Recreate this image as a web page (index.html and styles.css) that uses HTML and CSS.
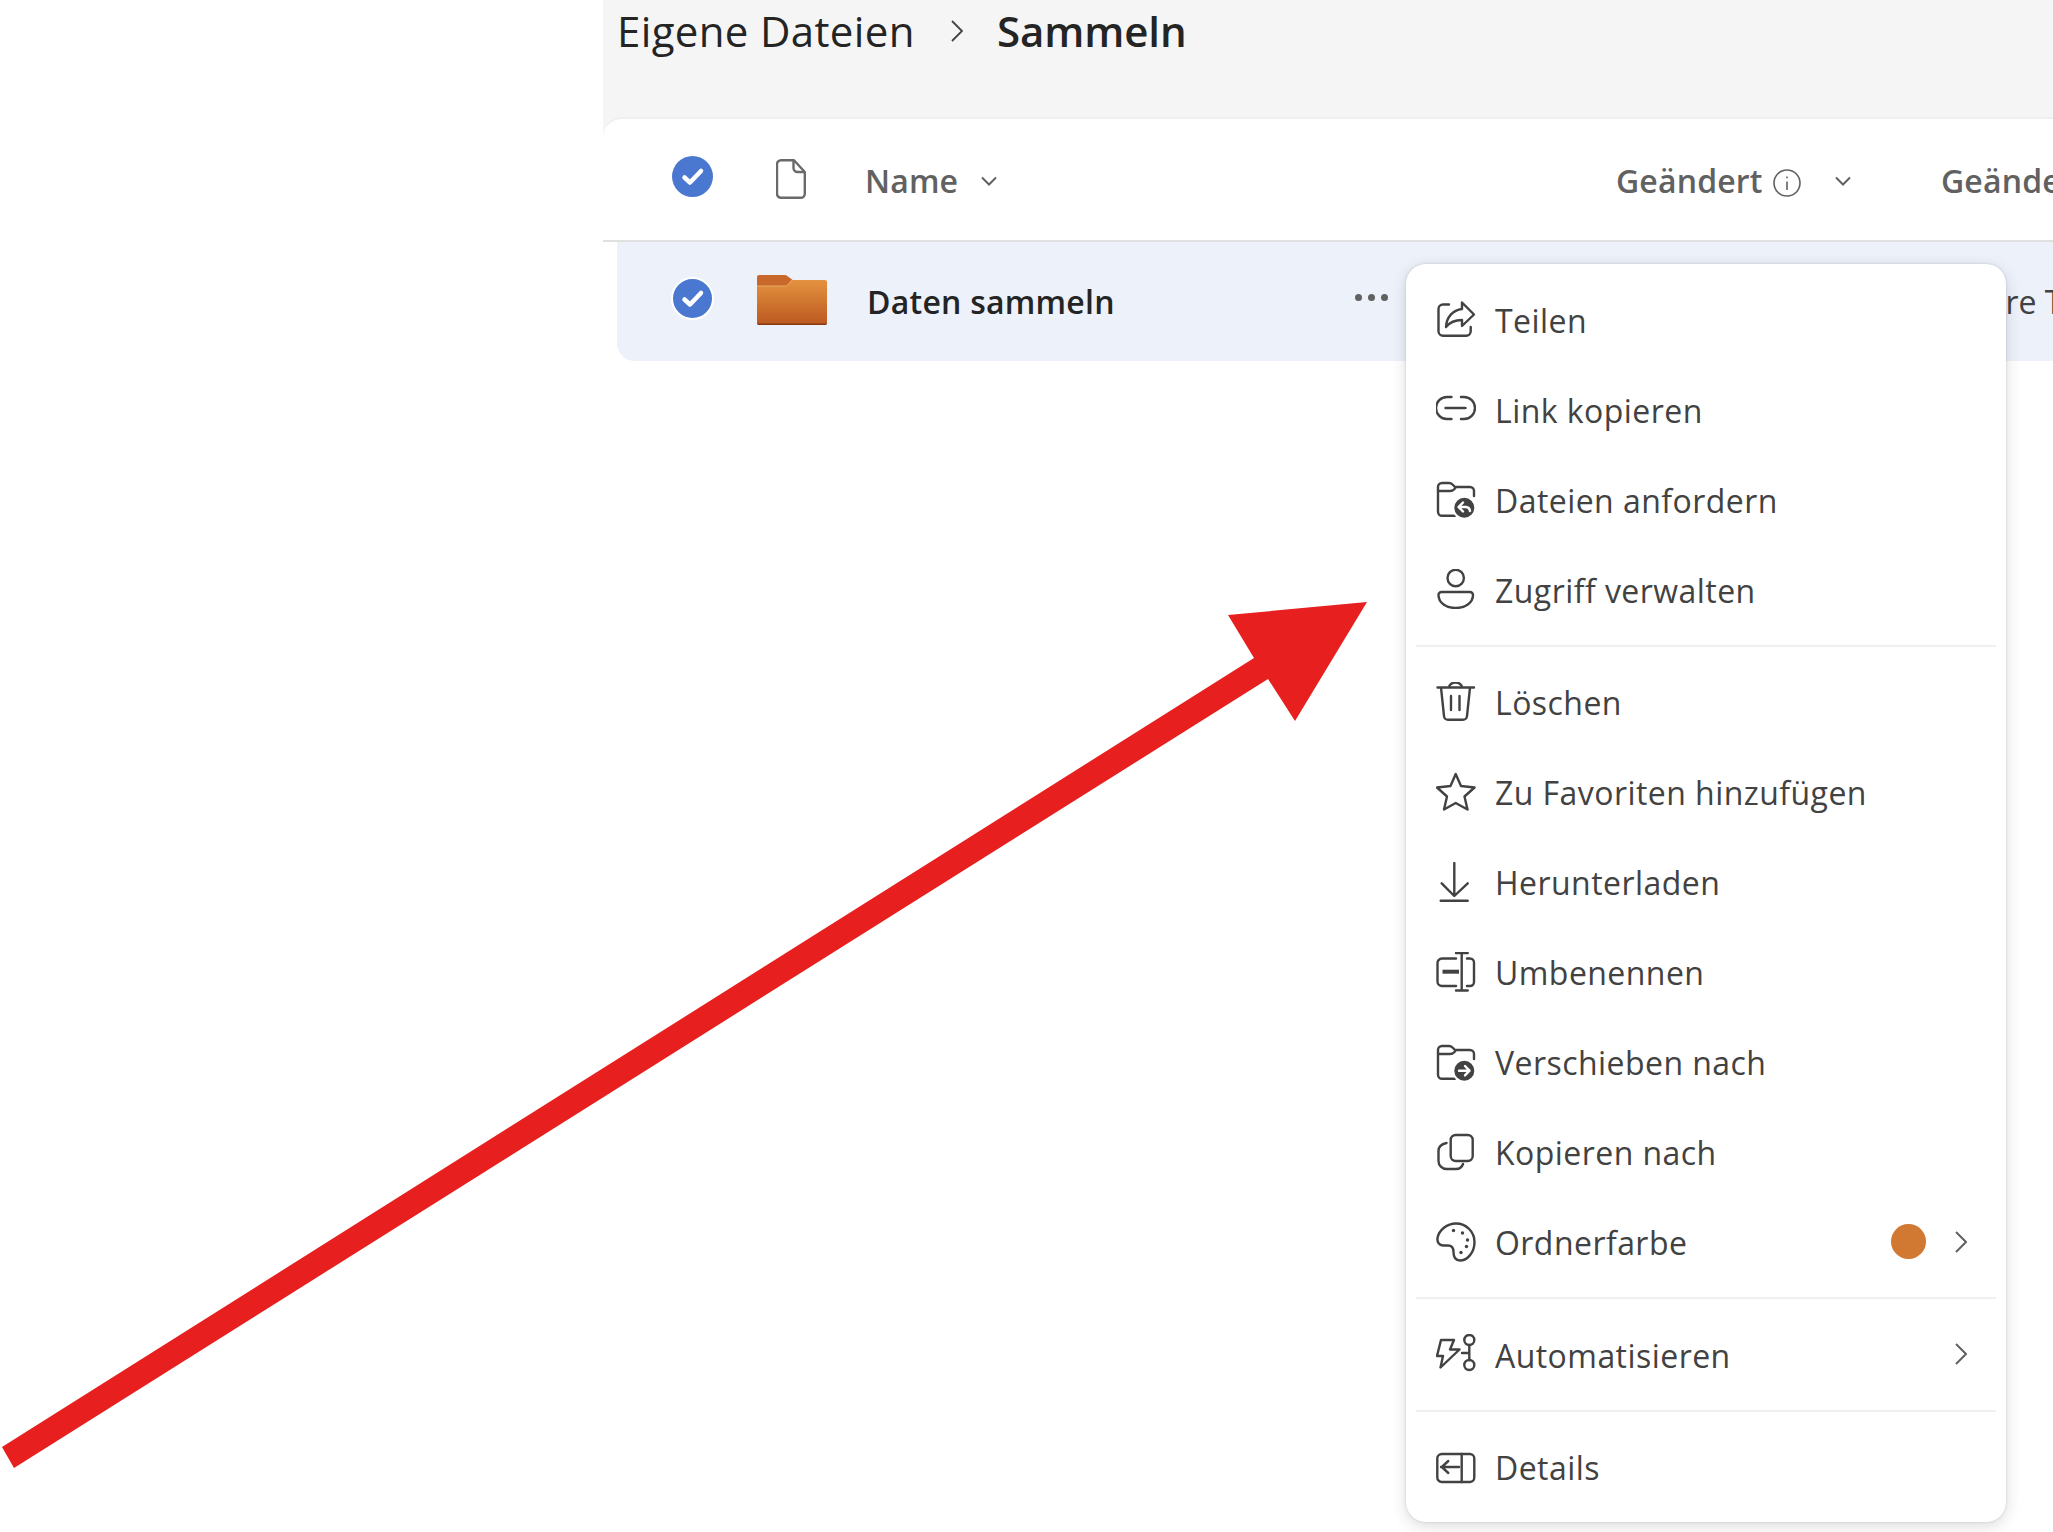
FILE: index.html
```html
<!DOCTYPE html>
<html lang="de">
<head>
<meta charset="utf-8">
<title>Sammeln</title>
<link rel="stylesheet" href="styles.css">
</head>
<body>
<div class="page">
  <aside class="side"></aside>
  <main class="main">
    <header class="crumbs">
      <span class="crumb">Eigene Dateien</span>
      <svg class="crumb-sep" viewBox="0 0 12 22"><path d="M1 1l10 10L1 21"/></svg>
      <strong class="crumb-current">Sammeln</strong>
    </header>
    <section class="panel">
      <div class="cols">
        <div class="cell-check">
          <svg class="check" viewBox="0 0 41 41"><circle cx="20.5" cy="20.5" r="20.5"/><path d="M12.500 21.500l5.500 5 11-11.500"/></svg>
        </div>
        <div class="cell-icon">
          <svg class="file-icon" viewBox="0 0 30 40"><path d="M5 1.200h13L28.800 13v21.800a4 4 0 0 1-4 4H5a4 4 0 0 1-4-4V5.200a4 4 0 0 1 4-4z"/><path d="M17.500 1.500V9a4 4 0 0 0 4 4h7"/></svg>
        </div>
        <div class="col-name">
          <span>Name</span>
          <svg class="col-chev" viewBox="0 0 16 10"><path d="M1 1.500l7 7 7-7"/></svg>
        </div>
        <div class="col-mod">
          <span>Geändert</span>
          <svg class="info" viewBox="0 0 28 28"><circle cx="14" cy="14" r="13"/><path d="M14 12.500v8.500M14 7.500v1.800"/></svg>
          <svg class="col-chev col-chev-mod" viewBox="0 0 16 10"><path d="M1 1.500l7 7 7-7"/></svg>
        </div>
        <div class="col-next">Geändert von</div>
      </div>
      <div class="row">
        <div class="row-check">
          <svg class="check check-ring" viewBox="-3 -3 47 47"><circle cx="20.5" cy="20.5" r="20.5"/><path d="M12.500 21.500l5.500 5 11-11.500"/></svg>
        </div>
        <svg class="folder" viewBox="0 0 70 50">
          <defs><linearGradient id="folderFill" x1="0" y1="0" x2="0" y2="1"><stop offset="0" stop-color="#e49340"/><stop offset="1" stop-color="#bb5820"/></linearGradient></defs>
          <path d="M2 0h25a5 5 0 0 1 4 1.500L37 6h31a2 2 0 0 1 2 2v10H0V2a2 2 0 0 1 2-2z" fill="#c8682b"/>
          <path d="M0 11h27c2 0 3-.5 4-1.500L35 5h33a2 2 0 0 1 2 2v41a2 2 0 0 1-2 2H2a2 2 0 0 1-2-2z" fill="url(#folderFill)"/>
          <path d="M0 11h27c2 0 3-.5 4-1.500L35 5" fill="none" stroke="#eaa869" stroke-width="1"/>
          <path d="M0 48.500h70V48a2 2 0 0 1-2 2H2a2 2 0 0 1-2-2z" fill="#86380f"/>
        </svg>
        <span class="row-name">Daten sammeln</span>
        <span class="dots"><i></i><i></i><i></i></span>
        <span class="row-mod">Andere Teilnehmer</span>
      </div>
    </section>
  </main>
</div>

<nav class="menu">
  <div class="item"><svg class="ic" viewBox="0 0 40 40"><path d="M13 5.500H7A4.500 4.500 0 0 0 2.500 10v22.200A4.500 4.500 0 0 0 7 36.700h23.200a4.500 4.500 0 0 0 4.500-4.500V28"/><path d="M26 3.500L38 15.500 26 27v-6c-7 0-12 2-16 7 .5-10 7-17 16-18z"/></svg><span>Teilen</span></div>
  <div class="item"><svg class="ic" viewBox="0 0 40 40"><path d="M15.500 8H11a11 11 0 0 0 0 22h4.500M25 8h3a11 11 0 0 1 0 22h-3M9.500 19h20"/></svg><span>Link kopieren</span></div>
  <div class="item"><svg class="ic" viewBox="0 0 40 40"><path d="M19 36.800H6a4 4 0 0 1-4-4V8a4 4 0 0 1 4-4h7a5 5 0 0 1 3.500 1.500L19 8h15a4 4 0 0 1 4 4v5M2 12h12c2 0 3-.5 4-1.500L20 8"/><circle class="badge" cx="28.300" cy="28.700" r="11"/><path class="badge-mark" d="M27 23.500l-4.500 4.500 4.500 4.500M23 28h7a4.500 4.500 0 0 1 4 4"/></svg><span>Dateien anfordern</span></div>
  <div class="item"><svg class="ic" viewBox="0 0 40 40"><circle cx="19.700" cy="9" r="8.200"/><path d="M5.500 23h28.500a3 3 0 0 1 3 3c0 8-8 13-17.300 13S2.500 34 2.500 26a3 3 0 0 1 3-3z"/></svg><span>Zugriff verwalten</span></div>
  <div class="sep"></div>
  <div class="item"><svg class="ic" viewBox="0 0 40 40"><path d="M1.500 5.500H38M13 5.500a6.500 5 0 0 1 13 0M5 5.500L8 34a4 4 0 0 0 4 3.800h15a4 4 0 0 0 4-3.800l3-28.500M15 14v14M23.500 14v14"/></svg><span>Löschen</span></div>
  <div class="item"><svg class="ic" viewBox="0 0 40 40"><path d="M19.700 2L25 14l13.500 1.500-10 9 3 13-11.800-6.500L8 37.500l3-13-10-9L14.500 14z"/></svg><span>Zu Favoriten hinzufügen</span></div>
  <div class="item"><svg class="ic" viewBox="0 0 40 40"><path d="M18.300 1v32M5.700 21.300L18.300 34l13.400-12.700M4.700 38.700h27"/></svg><span>Herunterladen</span></div>
  <div class="item"><svg class="ic" viewBox="0 0 40 40"><path d="M20 6.500H6A4.500 4.500 0 0 0 1.500 11v18.500A4.500 4.500 0 0 0 6 34h14M31 6.500h3a4 4 0 0 1 4 4V30a4 4 0 0 1-4 4h-3M25.700 1v37.500M20 1h11.700M20 38.500h11.700"/><path class="ic-bold" d="M6.500 19.700H23"/></svg><span>Umbenennen</span></div>
  <div class="item"><svg class="ic" viewBox="0 0 40 40"><path d="M19 36.800H6a4 4 0 0 1-4-4V8a4 4 0 0 1 4-4h7a5 5 0 0 1 3.500 1.500L19 8h15a4 4 0 0 1 4 4v5M2 12h12c2 0 3-.5 4-1.500L20 8"/><circle class="badge" cx="28.300" cy="28.700" r="11"/><path class="badge-mark" d="M23 28.700h10.500M29 24l4.500 4.700-4.500 4.700"/></svg><span>Verschieben nach</span></div>
  <div class="item"><svg class="ic" viewBox="0 0 40 40"><rect x="14.700" y="3" width="22" height="26" rx="5"/><path d="M10.500 11C5.500 12 2.500 15 2.500 19v10a8 8 0 0 0 8 8H20c3.500 0 6-2 7-5"/></svg><span>Kopieren nach</span></div>
  <div class="item"><svg class="ic" viewBox="0 0 40 40"><path d="M20 1.500c10.500 0 18.500 8.500 18.500 18.500 0 11-7.500 18.500-14.500 18.500-5 0-6.500-4.500-6.500-8.500s-1.500-6.500-5.500-6.500H7c-3.500-.5-6-3-5.500-7.500C3 8 11 1.500 20 1.500z"/><g class="palette-dots"><circle cx="17.500" cy="8.500" r="1.700"/><circle cx="26.500" cy="11" r="1.700"/><circle cx="31.500" cy="18" r="1.700"/><circle cx="30.500" cy="24.500" r="1.700"/><circle cx="25" cy="30.500" r="1.700"/></g></svg><span>Ordnerfarbe</span><i class="swatch"></i><svg class="chev" viewBox="0 0 12 22"><path d="M1 1l10 10L1 21"/></svg></div>
  <div class="sep"></div>
  <div class="item"><svg class="ic" viewBox="0 0 40 40"><path d="M5 6h13l-4 9.500h9.500l-19 18L7 22H1zM33.300 11v15M26 19h7.300"/><circle cx="33.300" cy="6" r="5"/><circle cx="33.300" cy="31" r="5"/></svg><span>Automatisieren</span><svg class="chev chev-solo" viewBox="0 0 12 22"><path d="M1 1l10 10L1 21"/></svg></div>
  <div class="sep"></div>
  <div class="item"><svg class="ic" viewBox="0 0 40 40"><rect x="1.300" y="7" width="37" height="28" rx="4.500"/><path d="M25.700 7v28M5 20h18M12.300 14l-6.500 6 6.500 6"/></svg><span>Details</span></div>
</nav>

<svg class="arrow" viewBox="0 0 2053 1532"><polygon points="1367,602 1228,615 1254,658 2,1447 14,1468 1268,679 1295,721"/></svg>
</body>
</html>
```
FILE: styles.css
```css
* { box-sizing: border-box; }
html, body { margin: 0; padding: 0; background: #fff; }
body {
  position: relative;
  width: 2053px;
  height: 1532px;
  overflow: hidden;
  font-family: "Open Sans", "Noto Sans", "Liberation Sans", sans-serif;
  color: #242424;
}
.page { display: flex; height: 100%; }
.side { flex: 0 0 603px; background: #fff; }
.main { flex: 1; min-width: 0; overflow: hidden; background: #f5f5f5; display: flex; flex-direction: column; }

.crumbs { height: 117px; flex: none; display: flex; align-items: flex-start; padding: 4px 0 0 14px; font-size: 42px; line-height: 54px; letter-spacing: 0.35px; }
.crumb { width: 300px; }
.crumb-sep { width: 12px; height: 22px; margin: 16px 34px 0 34px; fill: none; stroke: #424242; stroke-width: 1.8; }
.crumb-current { font-weight: 600; letter-spacing: -0.1px; }

.panel { flex: 1; background: #fff; border-top: 2px solid #efefef; border-top-left-radius: 20px; }
.cols { height: 123px; border-bottom: 2px solid #e0e0e0; display: flex; align-items: center; padding: 2px 0 0 68px; font-size: 32px; font-weight: 600; letter-spacing: 0.15px; color: #616161; white-space: nowrap; }
.cell-check { width: 41px; display: flex; margin-top: -9px; margin-left: 1px; }
.cell-icon { width: 93px; display: flex; padding-left: 63px; margin-top: -4px; }
.check { width: 41px; height: 41px; flex: none; }
.check circle { fill: #4a78d0; }
.check path { fill: none; stroke: #fff; stroke-width: 4.500; stroke-linecap: round; stroke-linejoin: round; }
.check-ring { width: 47px; height: 47px; }
.check-ring circle { stroke: #fff; stroke-width: 2; }
.file-icon { width: 30px; height: 40px; flex: none; fill: none; stroke: #6a6a6a; stroke-width: 2.400; stroke-linejoin: round; }
.col-name { margin-left: 59px; width: 751px; display: flex; align-items: center; gap: 23px; flex: none; }
.col-chev { width: 16px; height: 10px; fill: none; stroke: #616161; stroke-width: 2; }
.col-mod { width: 325px; display: flex; align-items: center; flex: none; }
.info { width: 28px; height: 28px; margin: 4px 34px 0 10px; fill: none; stroke: #616161; stroke-width: 1.600; }
.col-next { flex: none; }

.row { margin-left: 14px; height: 119px; background: #edf1fa; border-bottom-left-radius: 18px; display: flex; align-items: center; font-size: 32px; white-space: nowrap; }
.row-check { margin-left: 52px; width: 47px; display: flex; margin-top: -6px; }
.folder { width: 70px; height: 50px; margin-left: 41px; margin-top: -4px; flex: none; }
.row-name { margin-left: 40px; width: 488px; font-weight: 600; letter-spacing: 0.24px; flex: none; }
.dots { display: flex; gap: 6px; width: 150px; margin-top: -8px; flex: none; }
.dots i { width: 7px; height: 7px; border-radius: 50%; background: #616161; }
.row-mod { color: #424242; font-size: 32px; margin-left: 423px; flex: none; }

.menu {
  position: absolute;
  left: 1406px;
  top: 264px;
  width: 600px;
  padding: 12px 0 8.500px;
  background: #fff;
  border-radius: 20px;
  box-shadow: 0 4px 16px rgba(0, 0, 0, .14), 0 0 3px rgba(0, 0, 0, .14);
  font-size: 32px;
  letter-spacing: 0.45px;
  color: #424242;
}
.item { height: 90px; display: flex; align-items: center; padding: 0 39px 2px 30px; gap: 19px; white-space: nowrap; }
.ic { width: 40px; height: 40px; margin-bottom: 2px; flex: none; fill: none; stroke: #424242; stroke-width: 2.400; stroke-linecap: round; stroke-linejoin: round; }
.ic .ic-bold { stroke-width: 4; stroke-linecap: butt; }
.ic .badge { fill: #424242; stroke: #fff; stroke-width: 2; }
.ic .badge-mark { stroke: #fff; stroke-width: 2.400; }
.ic .palette-dots { fill: #424242; stroke: none; }
.swatch { width: 35px; height: 35px; border-radius: 50%; background: #d17832; margin-left: auto; margin-bottom: 2px; }
.chev { width: 12px; height: 22px; margin-left: 10px; margin-bottom: 2px; flex: none; fill: none; stroke: #616161; stroke-width: 2; }
.chev-solo { margin-left: auto; }
.sep { height: 2px; margin: 8.500px 10px 12px; background: #f0f0f0; }

.arrow { position: absolute; left: 0; top: 0; width: 2053px; height: 1532px; pointer-events: none; }
.arrow polygon { fill: #e71f1e; }
```
